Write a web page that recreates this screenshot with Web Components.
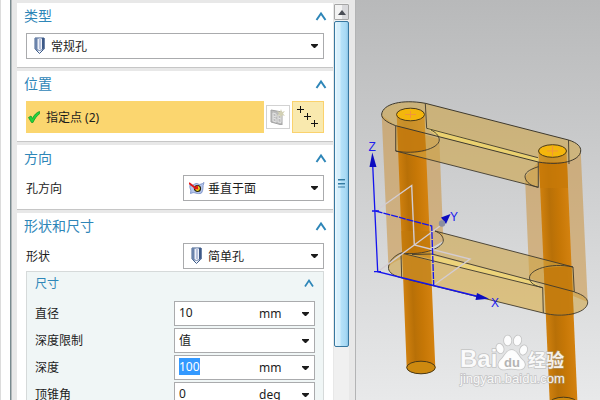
<!DOCTYPE html>
<html lang="zh-CN">
<head>
<meta charset="utf-8">
<title>孔</title>
<style>
  html, body { height: 100%; margin: 0; }
  body { overflow: hidden; background: #e8e8e8; color: #1c1c1c; font: 12px/17px "Noto Sans", "Noto Sans CJK SC", sans-serif; }
</style>
</head>
<body>
<hole-app></hole-app>

<template id="t-app">
  <style>
    :host { display: flex; height: 100vh; overflow: hidden; }
    .edge { flex: 0 0 10px; box-sizing: border-box; background: #fff; border-left: 1px solid #dcdcdc; }
    .rim { flex: 0 0 2px; border-left: 1px solid #788a8f; border-right: 1px solid #b4b9bb; background: #8f9a9e; box-sizing: border-box; }
    .dialog { flex: 332 1 0; min-width: 0; display: flex; padding: 3px 6px 0 5px; }
    .sections { flex: 1; min-width: 0; display: flex; flex-direction: column; gap: 3px; }
    model-view { flex: 244 1 0; min-width: 0; }
  </style>
  <div class="edge"></div><div class="rim"></div>
  <main class="dialog">
    <div class="sections">
      <panel-section heading="类型"><option-field name="类型" icon="hole" value="常规孔"></option-field></panel-section>
      <panel-section heading="位置"><point-picker></point-picker></panel-section>
      <panel-section heading="方向"><option-field label="孔方向" icon="normal" value="垂直于面"></option-field></panel-section>
      <panel-section heading="形状和尺寸">
        <option-field label="形状" icon="hole" value="简单孔"></option-field>
        <size-group heading="尺寸">
          <measure-field label="直径" value="10" unit="mm"></measure-field>
          <option-field inset label="深度限制" value="值"></option-field>
          <measure-field active label="深度" value="100" unit="mm"></measure-field>
          <measure-field label="顶锥角" value="0" unit="deg"></measure-field>
        </size-group>
      </panel-section>
    </div>
    <scroll-rail></scroll-rail>
  </main>
  <model-view></model-view>
</template>

<template id="t-section">
  <style>
    :host { display: block; flex: none; background: #fff; border-bottom: 1px solid #c6c6c6; }
    header { display: flex; align-items: center; justify-content: space-between; height: 26px; padding: 0 6px 0 7px; margin-bottom: 4px; }
    h2 { margin: 0; font-size: 14px; line-height: 20px; font-weight: 400; color: #2e86b8; }
    button { display: flex; padding: 0; border: 0; background: none; }
    .body { padding: 0 9px 8px; }
  </style>
  <header><h2></h2><button aria-label="折叠"><svg width="12" height="10" viewBox="0 0 12 10"><path d="M1.500 9 6 2.500 10.500 9" fill="none" stroke="#2e86b8" stroke-width="2"/></svg></button></header>
  <div class="body"><slot></slot></div>
</template>

<template id="t-group">
  <style>
    :host { display: block; margin-top: 2px; padding: 0 8px 8px; border: 1px solid #d6dada; background: #f0f6f6; }
    header { display: flex; align-items: center; justify-content: space-between; height: 22px; margin-bottom: 7px; padding-right: 1px; }
    h3 { margin: 0; font-size: 12px; line-height: 17px; font-weight: 400; color: #2e86b8; }
    button { display: flex; padding: 0; border: 0; background: none; }
    .rows { display: flex; flex-direction: column; gap: 2px; }
  </style>
  <header><h3></h3><button aria-label="折叠"><svg width="10" height="8" viewBox="0 0 10 8"><path d="M1 7.500 5 1.500 9 7.500" fill="none" stroke="#2e86b8" stroke-width="1.700"/></svg></button></header>
  <div class="rows"><slot></slot></div>
</template>

<template id="t-option">
  <style>
    :host { display: flex; align-items: center; }
    label { flex: 1; }
    label:empty { display: none; }
    .box { flex: 0 1 141px; min-width: 0; display: grid; grid-template-columns: minmax(0, 1fr); align-items: center; box-sizing: border-box; height: 26px; border: 1px solid #aaabad; background: #fff; }
    :host([name]) .box { flex: 1; }
    :host([inset]) .box { height: 25px; }
    .box > * { grid-area: 1 / 1; }
    select { appearance: none; width: 100%; height: 24px; padding: 0 20px 0 24px; border: 0; outline: 0; background: none; color: inherit; font: inherit; }
    :host([inset]) select { padding-left: 4px; height: 23px; }
    .icon { display: flex; padding-left: 5px; }
    .arrow { justify-self: end; margin-right: 5px; pointer-events: none; }
  </style>
  <label for="s"></label>
  <div class="box"><span class="icon"></span><select id="s"></select>
    <svg class="arrow" width="7" height="4" viewBox="0 0 7 4"><path d="M0 0H7V1L4 4H3L0 1Z" fill="#1b1b1b"/></svg></div>
</template>

<template id="t-measure">
  <style>
    :host { display: flex; align-items: center; }
    label { flex: 1; }
    .box { flex: 0 1 141px; min-width: 0; display: flex; align-items: center; box-sizing: border-box; height: 25px; padding: 0 5px 0 4px; border: 1px solid #aaabad; background: #fff; }
    input { flex: 1; min-width: 0; height: 17px; padding: 0; margin-bottom: 2px; border: 0; outline: 0; background: none; color: inherit; font: inherit; caret-color: transparent; }
    input::selection { background: #3399ff; color: #fff; }
    .unit { flex: 0 0 50px; display: grid; align-items: center; }
    .unit > * { grid-area: 1 / 1; }
    select { appearance: none; width: 100%; padding: 0; border: 0; outline: 0; background: none; color: inherit; font: inherit; }
    svg { justify-self: end; pointer-events: none; }
  </style>
  <label for="v"></label>
  <div class="box"><input id="v" type="text"><span class="unit"><select aria-label="单位"></select>
    <svg width="7" height="4" viewBox="0 0 7 4"><path d="M0 0H7V1L4 4H3L0 1Z" fill="#1b1b1b"/></svg></span></div>
</template>

<template id="t-picker">
  <style>
    :host { display: flex; align-items: center; gap: 2px; }
    button { font: inherit; color: inherit; margin: 0; box-sizing: border-box; }
    .pick { flex: 1; display: flex; align-items: center; gap: 6px; height: 32px; padding: 0 2px; border: 0; background: #fbd66f; }
    .dlg { width: 24px; height: 24px; padding: 3px; border: 1px solid #d2d2d2; background: #fff; }
    .pts { width: 32px; height: 32px; padding: 0; border: 1px solid #fad26d; background: #f9e9ae; }
    svg { display: block; }
  </style>
  <button class="pick">
    <svg width="12" height="12" viewBox="0 0 12 12"><path d="M.5 6.500 3 5 4.500 7.500C6 4 8.500 1.500 11.500.500L11.800 2.500C8.500 5 6.500 8 5 11.500L3.500 11.500Z" fill="#22d43c" stroke="#169a28" stroke-width=".8"/></svg>
    <span>指定点 (2)</span></button>
  <button class="dlg" aria-label="点对话框"><svg width="16" height="16" viewBox="0 0 16 16"><path d="M1 1 12 3V16L1 13Z" fill="#bcbcbc" stroke="#a2a2a2"/><path d="M3 4v8M3 4l3 1v3l-3-1M3 12l3 1V10l-3-1M8 6v7M8 6l3 .5v7l-3-.5M8 9l3 1" fill="none" stroke="#e3e3e3"/><path d="M11 0 12 3 15 2 13 4.500 15 7 12 6 11 9 10 6 7 7 9 4.500 7 2 10 3Z" fill="#d2d0b4"/></svg></button>
  <button class="pts" aria-label="点"><svg width="30" height="30" viewBox="0 0 30 30"><path d="M4 7.500h7M7.500 4v7M11 14.500h7M14.500 11v7M18 21.500h7M21.500 18v7" stroke="#111" fill="none"/></svg></button>
</template>

<template id="t-rail">
  <style>
    :host { flex: 0 0 15px; display: flex; flex-direction: column; margin-left: 1px; padding-top: 1px; background: #f0f0f0; }
    button { height: 16px; margin: 0 0 1px; padding: 0; box-sizing: border-box; border: 1px solid #a5a5a5; border-radius: 1px; background: linear-gradient(90deg, #f3f3f3 50%, #d9d9dc 50%); display: grid; place-items: center; }
    .track { flex: 1; min-height: 0; }
    .thumb { height: 86%; box-sizing: border-box; border: 1px solid #37779f; border-radius: 2px; background: linear-gradient(90deg, #e9f7fe 0 1px, #d6effc 2px 5px, #b6e2f9 6px, #a7d9f4 11px, #8bc4e6 13px); display: grid; place-items: center; }
  </style>
  <button aria-label="向上滚动"><svg width="8" height="5" viewBox="0 0 8 5"><path d="M4 0 8 5H0Z" fill="#4a4d55"/></svg></button>
  <div class="track"><div class="thumb"><svg width="7" height="9" viewBox="0 0 7 9"><path d="M0 .5h7M0 4.500h7M0 8h7" stroke="#347ba2"/><path d="M0 1.500h7M0 5.500h7" stroke="#7bb4d3"/></svg></div></div>
</template>

<template id="t-model">
  <style>
    :host { display: block; border-left: 1px solid #b3b4b5; background: linear-gradient(#b8b9ba, #e8e9ea); box-sizing: border-box; }
    svg { display: block; width: 100%; height: 100%; }
    text { font-family: "Liberation Sans", "Noto Sans CJK SC", sans-serif; }
  </style>
  <svg viewBox="356 0 244 400" preserveAspectRatio="xMidYMid meet" role="img" aria-label="三维模型">
    <defs>
      <linearGradient id="rodL" gradientUnits="userSpaceOnUse" x1="402" y1="250" x2="431" y2="248.700"><stop offset="0" stop-color="#cf800e"/><stop offset=".3" stop-color="#b87007"/><stop offset=".6" stop-color="#c67706"/><stop offset="1" stop-color="#d58310"/></linearGradient>
      <linearGradient id="rodR" gradientUnits="userSpaceOnUse" x1="543" y1="250" x2="572" y2="248.700"><stop offset="0" stop-color="#cf800e"/><stop offset=".3" stop-color="#b87007"/><stop offset=".6" stop-color="#c67706"/><stop offset="1" stop-color="#d58310"/></linearGradient>
    </defs>
    <g fill="#cb9440" fill-opacity=".56">
      <path d="M381.700 115 388.500 268C392 258 420 256 443.300 241L439.300 139 396 126Z"/>
      <path d="M525 177 529.300 278 587.700 302 580.700 151C578 164 550 164 538 162Z"/>
    </g>
    <path d="M396.700 115 406.700 368A14.300 6.300 0 0 0 435.300 367L424.500 115Z" fill="url(#rodL)"/>
    <path d="M538.500 151 549.800 404H577.500L566.500 151Z" fill="url(#rodR)"/>
    <g fill="#cfa443" fill-opacity=".58">
      <path d="M435 231 573 267 574.300 292C584 295 588 299 587.700 303C586 314 562 318 543.300 313L401.700 278C391 275 388 271 388.500 267C389 260 396 255 401 253C425 256 444 247 443.300 240C443 236 440 233 435 231Z"/>
      <path d="M425.300 103.300 568.500 140C578 143 581 147 580.700 151C580 161 560 166 538.300 162V187.300L395.700 151V125.700C386 122 381 118 381.700 114C383 104 402 99 425.300 103.300Z"/>
    </g>
    <path d="M402 253 410 254 530 280 542.700 288V313L402 278Z" fill="#e4c67c" fill-opacity=".4"/>
    <path d="M397.200 126 398.200 151.500C404 153 416 153 426 151L424.800 133Z" fill="#c27508" fill-opacity=".78"/>
    <path d="M402.200 253.500 403.200 278 431.800 285.500 430.500 261Z" fill="#c27a0c" fill-opacity=".72"/>
    <path d="M402.200 253 415 254 430.300 249 429.600 231 401.300 231Z" fill="#c27a0c" fill-opacity=".6"/>
    <path d="M539 162 540.200 188H568L567 162Z" fill="#c77a08" fill-opacity=".75"/>
    <path d="M543.700 268 571.600 266 573.700 315 545.800 314Z" fill="#c37809" fill-opacity=".82"/>
    <path d="M425.300 127 538 158V162L437 136Z" fill="#ead170"/>
    <path d="M431 255 530 280 542 287.500 431 260Z" fill="#ecd37a"/>
    <g fill="none" stroke="#3f3a2e" stroke-width="1">
      <path d="M425.300 103.300 568.500 140C578 143 581 147 580.700 151C580 161 560 166 538.300 162L395.700 125.700C386 122 381 118 381.700 114C383 104 402 99 425.300 103.300Z"/>
      <path d="M425.300 103.300 426.700 128.300 538 157.700M395.700 125.700V151L538.300 187.300V162M395.700 151C415 155 439 149 439.300 140C439 135 435 132 431 130M538.300 166.700C528 170 525 173 525 177C526 183 532 186 538.300 187.300M568.500 140 569 164" stroke-width=".9"/>
      <path stroke-width=".9" d="M435 231 573 267 574.300 292C584 295 588 299 587.700 303C586 314 562 318 543.300 313L401.700 278C391 275 388 271 388.500 267C389 260 396 255 401 253C425 256 444 247 443.300 240C443 236 440 233 435 231M401 253 401.700 278M401 253 542.700 287.700 543.300 313M412 254.500 432 254 574 291.700M573 267C550 262 529 270 529.500 278C530 284 536 286 542.700 287.700"/>
    </g>
    <g stroke="#4a3a18">
      <ellipse cx="410.500" cy="114.500" rx="14" ry="6.300" fill="#f4b60c"/>
      <ellipse cx="552.500" cy="151" rx="14" ry="6.300" fill="#f4b60c"/>
      <ellipse cx="421" cy="367.500" rx="14.300" ry="6.300" fill="#cd890f"/>
      <ellipse cx="563.500" cy="403.500" rx="14" ry="6.300" fill="#cd890f"/>
    </g>
    <path d="M405 114.500h11M410.500 111v7M547 151h11M552.500 146v10" stroke="#f3953a" fill="none"/>
    <path d="M375.700 211 411.700 185.500 414.300 245 470 259 434 285M377.700 271.700 414.300 245 440 226" fill="none" stroke="#d3ccd2" stroke-width="1.400"/>
    <g fill="none" stroke="#1414ee" stroke-width="1.300">
      <path d="M372.700 165 377.700 271.700 478 296.500"/>
      <path d="M375.700 211 431.700 226 433.700 285" stroke-dasharray="7 1"/>
      <path d="M372 211h7M374 271.700h7"/>
    </g>
    <g fill="#0c0cc0"><path d="M372.300 152.500 376.500 167H369.500Z"/><path d="M489 298.700 475.500 300 477 293Z"/><path d="M450.500 214 441 217.500 446 224Z"/></g>
    <circle cx="442" cy="223.500" r="3.200" fill="#8b8ea0"/>
    <g fill="#2020ee" font-size="12"><text x="368.500" y="151">Z</text><text x="450" y="221">Y</text><text x="491" y="307">X</text></g>
    <g fill="#fff" fill-opacity=".9" stroke="#a8a8a8" stroke-opacity=".55" stroke-width="1.500" paint-order="stroke">
      <text x="460" y="367" font-size="24" font-weight="700">Bai</text>
      <path d="M511.700 350C506 350 505 356 500.500 360C496 365 499 370 505 369.500C509 368.500 514 368.500 518 369.500C525 370 527 364 522.500 360C518 356 517 350 511.700 350Z"/>
      <ellipse cx="500" cy="348.500" rx="3.500" ry="4.800" transform="rotate(-20 500 348.500)"/>
      <ellipse cx="507.700" cy="340.500" rx="3.700" ry="5"/>
      <ellipse cx="517.500" cy="340.500" rx="3.700" ry="5" transform="rotate(12 517.500 340.500)"/>
      <ellipse cx="523.500" cy="350" rx="3.500" ry="4.800" transform="rotate(20 523.500 350)"/>
      <text x="528" y="367" font-size="18" font-weight="700">经验</text>
      <text x="460" y="383" font-size="13">jingyan.baidu.com</text>
    </g>
    <text x="504" y="367" font-size="13" font-weight="700" fill="#b4b4b4">du</text>
  </svg>
</template>

<script>
const icons = {
  hole: '<svg width="14" height="18" viewBox="0 0 14 18"><path d="M3 1H12V12L7.500 16.500 3 12Z" fill="#eef1f8" stroke="#3e5c8a"/><path d="M3 1V12L5.500 14V1Z" fill="#6a83ab"/><path d="M10 1V14L12.500 12V1Z" fill="#3d5987"/><path d="M8 1V12" stroke="#b7c2dc" stroke-width="2"/><path d="M3 12 7.500 13.500 12 12" fill="none" stroke="#6f86ad"/></svg>',
  normal: '<svg width="16" height="14" viewBox="0 0 16 14"><path d="M1 4C4 6 6 1 9 3C11 4 13 3 15 1.500 13 6 15 8 12.500 12 8 14 6 10 1.500 12.500 3 8 0 8 1 4Z" fill="#b7c8ec" stroke="#8398cd"/><circle cx="8.500" cy="7.500" r="3" fill="#ffe21e" stroke="#26220c" stroke-width="1.200"/><path d="M0 2 7 7.500" stroke="#e01818" stroke-width="1.800"/><path d="M9.500 8.500 8.500 4 4.500 8Z" fill="#e01818"/></svg>'
};
class Piece extends HTMLElement {
  connectedCallback() {
    if (this.shadowRoot) return;
    this.attachShadow({ mode: 'open' }).append(document.getElementById(this.constructor.tpl).content.cloneNode(true));
    this.fill(s => this.shadowRoot.querySelector(s), n => this.getAttribute(n) || '');
  }
  fill() {}
}
const define = (tag, tpl, fill) => {
  const C = class extends Piece {};
  C.tpl = tpl;
  if (fill) C.prototype.fill = fill;
  customElements.define(tag, C);
};
define('panel-section', 't-section', ($, a) => { $('h2').textContent = a('heading'); });
define('size-group', 't-group', ($, a) => { $('h3').textContent = a('heading'); });
define('option-field', 't-option', ($, a) => {
  $('label').textContent = a('label');
  if (a('name')) $('select').setAttribute('aria-label', a('name'));
  $('.icon').innerHTML = icons[a('icon')] || '';
  $('select').add(new Option(a('value')));
});
define('measure-field', 't-measure', function ($, a) {
  $('label').textContent = a('label');
  $('input').value = a('value');
  $('select').add(new Option(a('unit')));
  if (this.hasAttribute('active')) { $('input').focus({ preventScroll: true }); $('input').select(); }
});
define('point-picker', 't-picker');
define('scroll-rail', 't-rail');
define('model-view', 't-model');
define('hole-app', 't-app');
</script>
</body>
</html>
